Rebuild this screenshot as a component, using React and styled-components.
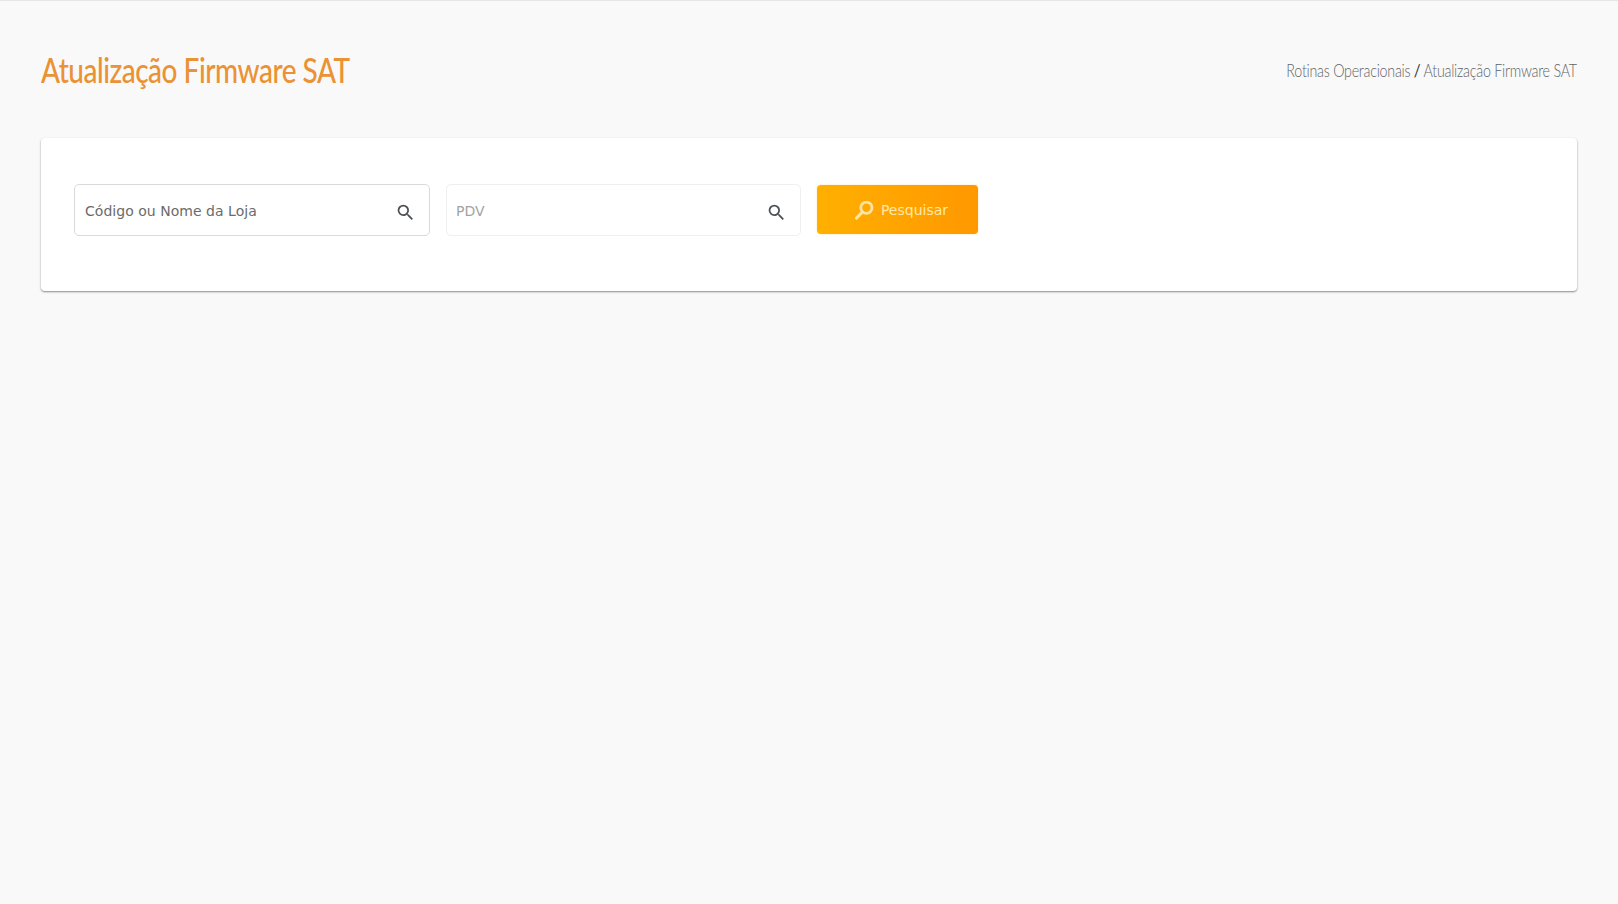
import React from 'react'
import styled, { createGlobalStyle } from 'styled-components'
import { MdSearch } from 'react-icons/md'

const GlobalStyle = createGlobalStyle`
    html, body {
        margin: 0;
        background: #f9f9f9;
    }
    * {
        box-sizing: border-box;
    }
`
const Page = styled.div`
    min-height: 904px;
    border-top: 1px solid #e6e6e6;
    padding: 0 41px;
`
const Header = styled.div`
    height: 137px;
    padding-bottom: 1px;
    display: flex;
    align-items: center;
    justify-content: space-between;
`
// Dosis is not installed, so Lato is narrowed to take up the same width
const Title = styled.h1`
    margin: 0;
    font-family: "Lato", sans-serif;
    font-weight: 500;
    font-size: 34px;
    letter-spacing: -0.6px;
    color: #ea9234;
    transform: scaleX(0.823);
    transform-origin: left center;
`
const Breadcrumb = styled.div`
    padding-top: 2px;
    font-family: "Lato", sans-serif;
    font-weight: 300;
    font-size: 17px;
    letter-spacing: -0.3px;
    color: #5f6468;
    transform: scaleX(0.84);
    transform-origin: right center;
    span {
        color: #33383d;
        margin: 0 4px;
        font-size: 18px;
        font-weight: 400;
    }
`
const Card = styled.div`
    height: 153px;
    background: #fff;
    border-radius: 4px;
    box-shadow: 0 1px 2px rgba(0, 0, 0, 0.45);
    padding: 46px 33px;
    display: flex;
    align-items: flex-start;
    gap: 16px;
`
const Field = styled.div`
    width: ${props => props.$width}px;
    height: 52px;
    display: flex;
    align-items: center;
    padding: 0 13px 0 ${props => props.$indent}px;
    border: 1px solid ${props => props.$border};
    border-radius: 5px;
    background: #fff;
    svg {
        flex: none;
        margin-top: 4px;
        color: #4b5257;
    }
`
const Input = styled.input`
    flex: 1;
    min-width: 0;
    border: 0;
    outline: 0;
    padding: 2px 0 0;
    font-family: "DejaVu Sans", sans-serif;
    font-size: 14px;
    letter-spacing: 0.03px;
    background: transparent;
    &::placeholder {
        color: ${props => props.$placeholder};
        opacity: 1;
    }
`
const Button = styled.button`
    width: 161px;
    height: 49px;
    margin-top: 1px;
    border: 0;
    border-radius: 4px;
    background: linear-gradient(to right, #ffb000, #ff9800);
    box-shadow: 0 0 2px rgba(255, 200, 80, 0.6);
    color: #ffe9a8;
    font-family: "DejaVu Sans", sans-serif;
    font-size: 14px;
    display: flex;
    align-items: center;
    justify-content: center;
    gap: 7px;
    padding: 0 0 0 7px;
`

const LensIcon = () => (
    <svg width="20" height="20" viewBox="0 0 20 20" fill="none" stroke="#ffe3a0" strokeLinecap="round">
        <circle cx="12.4" cy="7.8" r="5.6" strokeWidth="2.8" />
        <path d="M8 12.4 L2.6 18" strokeWidth="3.2" />
    </svg>
)

export default function App() {
    return (
        <Page>
            <GlobalStyle />
            <Header>
                <Title>Atualização Firmware SAT</Title>
                <Breadcrumb>Rotinas Operacionais<span>/</span>Atualização Firmware SAT</Breadcrumb>
            </Header>
            <Card>
                <Field $width={356} $border="#d9d9d9" $indent={10}>
                    <Input placeholder="Código ou Nome da Loja" $placeholder="#6b6b6b" />
                    <MdSearch size={21} />
                </Field>
                <Field $width={355} $border="#efefef" $indent={9}>
                    <Input placeholder="PDV" $placeholder="#a3a3a3" />
                    <MdSearch size={21} />
                </Field>
                <Button><LensIcon />Pesquisar</Button>
            </Card>
        </Page>
    )
}
